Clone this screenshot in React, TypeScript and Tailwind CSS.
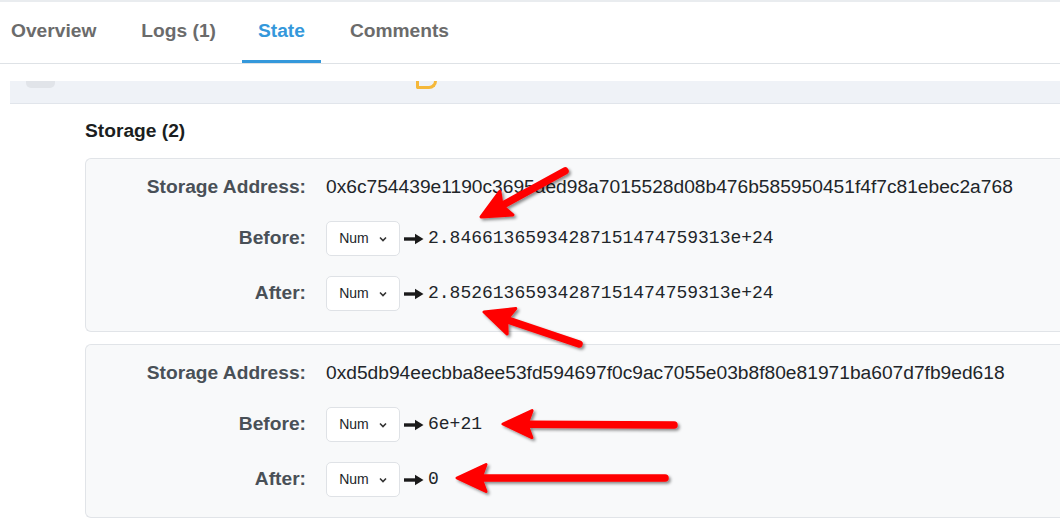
import React from "react";

interface StorageEntry {
  address: string;
  before: string;
  after: string;
}

const entries: StorageEntry[] = [
  {
    address: "0x6c754439e1190c3695aed98a7015528d08b476b585950451f4f7c81ebec2a768",
    before: "2.84661365934287151474759313e+24",
    after: "2.85261365934287151474759313e+24",
  },
  {
    address: "0xd5db94eecbba8ee53fd594697f0c9ac7055e03b8f80e81971ba607d7fb9ed618",
    before: "6e+21",
    after: "0",
  },
];

const tabs = ["Overview", "Logs (1)", "State", "Comments"];

const HeavyArrow = () => (
  <svg width="20" height="12" viewBox="0 0 20 12" className="shrink-0">
    <rect x="0" y="4.3" width="12" height="3.4" fill="#1a1a1a" />
    <path d="M11 0.8 L19.5 6 L11 11.2 Z" fill="#1a1a1a" />
  </svg>
);

const NumSelect = () => (
  <div className="flex h-[35px] w-[74px] items-center justify-center gap-[10px] rounded-[5px] border border-[#dfe2e6] bg-white text-[14px] text-[#212529]">
    <span>Num</span>
    <svg width="8" height="6" viewBox="0 0 8 6">
      <path d="M1 1.5 L4 4.5 L7 1.5" stroke="#333" strokeWidth="1.6" fill="none" />
    </svg>
  </div>
);

const ValueRow = ({ label, value }: { label: string; value: string }) => (
  <>
    <div className="text-right font-bold text-[#495057]">{label}</div>
    <div className="flex items-center">
      <NumSelect />
      <span className="ml-[4px]">
        <HeavyArrow />
      </span>
      <span className="ml-[4px] font-['Liberation_Mono',monospace] text-[18px] text-[#212529]">{value}</span>
    </div>
  </>
);

// red annotation arrow drawn from tail to tip
const Annotation = ({ x1, y1, x2, y2 }: { x1: number; y1: number; x2: number; y2: number }) => {
  const dx = x2 - x1;
  const dy = y2 - y1;
  const len = Math.hypot(dx, dy);
  const ux = dx / len;
  const uy = dy / len;
  const px = -uy;
  const py = ux;
  const headLen = 29;
  const half = 13.5;
  const bx = x2 - ux * headLen;
  const by = y2 - uy * headLen;
  const head = `${x2},${y2} ${bx + px * half},${by + py * half} ${bx + ux * 5},${by + uy * 5} ${bx - px * half},${by - py * half}`;
  return (
    <g filter="url(#shadow)">
      <line x1={x1} y1={y1} x2={bx + ux * 4} y2={by + uy * 4} stroke="#ff0000" strokeWidth="7.5" strokeLinecap="round" />
      <polygon points={head} fill="#ff0000" stroke="#ff0000" strokeWidth="3" strokeLinejoin="round" />
    </g>
  );
};

export default function App() {
  return (
    <div className="relative h-[528px] w-[1060px] overflow-hidden bg-white font-['Liberation_Sans',Arial,sans-serif] text-[19.2px] text-[#212529]">
      <div className="border-t-2 border-[#e9ecef]">
        <div className="flex h-[62px] items-stretch border-b border-[#dee2e6]">
          {tabs.map((t) => (
            <div
              key={t}
              className={`flex items-center border-b-[3px] text-[19.2px] font-bold ${
                t === "State" ? "border-[#3498db] px-[16px] text-[#3498db]" : "border-transparent px-[11px] text-[#6b6b6b]"
              } ${t === "Overview" ? "mr-[23px]" : t === "Logs (1)" ? "mr-[15px]" : t === "State" ? "mr-[18px]" : ""}`}
            >
              <span className="-mb-[1px]">{t}</span>
            </div>
          ))}
        </div>
      </div>

      <div className="pt-[17px]">
        <div className="ml-[10px] flex h-[23px] items-start border-b border-[#e1e5eb] bg-[#eff2f7]">
          <div className="ml-[16px] h-[7px] w-[29px] rounded-b-[5px] bg-[#e1e4e9]" />
          <div className="ml-[361px] h-[8px] w-[21px] rounded-bl-[2px] rounded-br-[11px] border-b-[3px] border-l-[3px] border-r-[3px] border-[#f5b83a]" />
        </div>

        <div className="pl-[85px]">
          <div className="mt-[16px] text-[19.2px] font-bold leading-[22px] text-[#1b1e21]">Storage (2)</div>

          <div className="mt-[16px] flex flex-col gap-[12px]">
            {entries.map((e) => (
              <div
                key={e.address}
                className="grid grid-cols-[220px_1fr] items-center gap-x-[20px] gap-y-[20px] rounded-l-[6px] border border-r-0 border-[#e1e4e8] bg-[#f8f9fa] pb-[20px] pt-[14px]"
              >
                <div className="text-right font-bold leading-[28px] text-[#495057]">Storage Address:</div>
                <div className="whitespace-nowrap leading-[28px]">{e.address}</div>
                <ValueRow label="Before:" value={e.before} />
                <ValueRow label="After:" value={e.after} />
              </div>
            ))}
          </div>
        </div>
      </div>

      <svg className="pointer-events-none absolute left-0 top-0" width="1060" height="528">
        <defs>
          <filter id="shadow" x="-20%" y="-50%" width="140%" height="200%">
            <feDropShadow dx="2" dy="2" stdDeviation="1.6" floodColor="#000" floodOpacity="0.45" />
          </filter>
        </defs>
        <Annotation x1={565} y1={171} x2={481} y2={217} />
        <Annotation x1={579} y1={344} x2={484} y2={312} />
        <Annotation x1={674} y1={425} x2={503} y2={424} />
        <Annotation x1={665} y1={478} x2={457} y2={478} />
      </svg>
    </div>
  );
}
